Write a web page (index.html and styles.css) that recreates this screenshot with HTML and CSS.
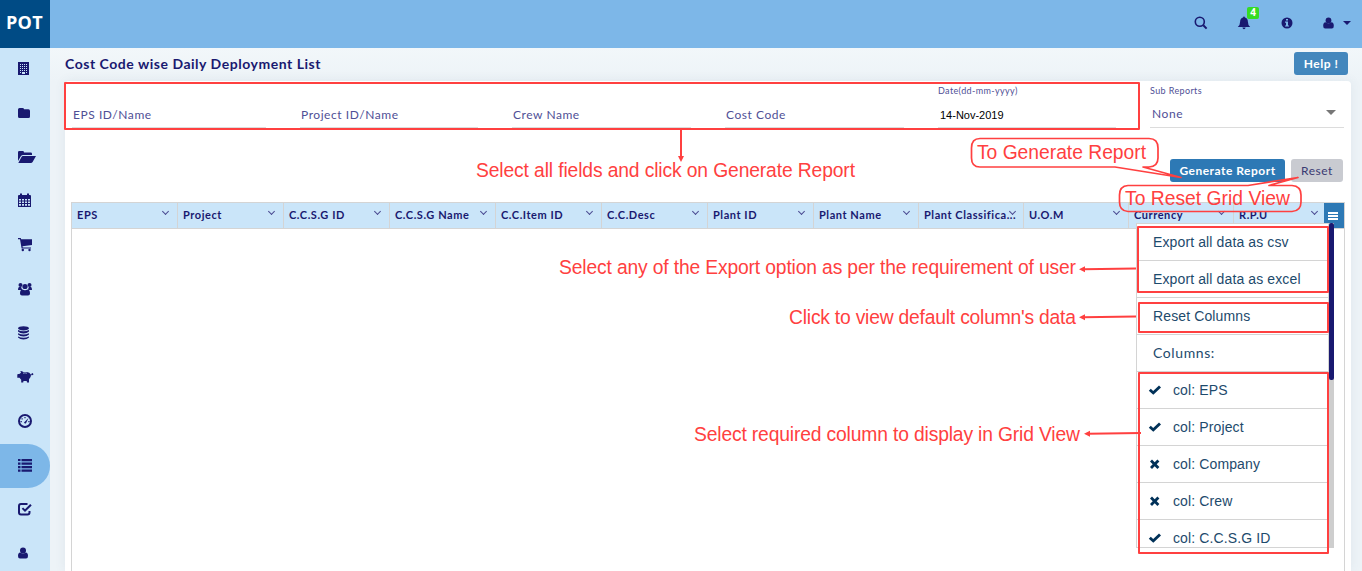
FILE: index.html
```html
<!DOCTYPE html>
<html lang="en">
<head>
<meta charset="utf-8">
<title>Cost Code wise Daily Deployment List</title>
<link rel="stylesheet" href="styles.css">
</head>
<body>
<div class="app">
  <aside class="sidebar">
    <div class="logo">POT</div>
    <nav class="nav">
      <a class="nav-item"><svg viewBox="0 0 16 16"><path fill-rule="evenodd" d="M0 1h11v13H0zM2 3v1h1V3zm2 0v1h1V3zm2 0v1h1V3zm2 0v1h1V3zM2 5v1h1V5zm2 0v1h1V5zm2 0v1h1V5zm2 0v1h1V5zM2 7v1h1V7zm2 0v1h1V7zm2 0v1h1V7zm2 0v1h1V7zM2 9v1h1V9zm2 0v1h1V9zm2 0v1h1V9zm2 0v1h1V9zM2 11v1h1v-1zm2 0v2h3v-2zm4 0v1h1v-1z"/></svg></a>
      <a class="nav-item"><svg viewBox="0 0 16 16"><path d="M0 4.500Q0 3 1.500 3h3Q6 3 6 4.300h4.500Q12 4.300 12 6v5.500Q12 13 10.500 13h-9Q0 13 0 11.500z"/></svg></a>
      <a class="nav-item"><svg class="wide" viewBox="0 0 18 16"><path d="M0 12V3.200Q0 2 1.200 2h3.500Q6 2 6 3.400h6.700Q14 3.400 14 4.800V6H5Q3.800 6 3 7zM4.800 7H18l-3.400 6q-.6 1-1.700 1H.3l3.200-6q.5-1 1.300-1z"/></svg></a>
      <a class="nav-item"><svg viewBox="0 0 16 16"><path fill-rule="evenodd" d="M1 2h1V.5h2V2h5V.5h2V2h1q1 0 1 1v11H0V3q0-1 1-1zm0 4v1.400h2V6zm3 0v1.400h2V6zm3 0v1.400h2V6zm3 0v1.400h2V6zM1 8.400v1.500h2V8.400zm3 0v1.500h2V8.400zm3 0v1.500h2V8.400zm3 0v1.500h2V8.400zM1 11v1.800h2V11zm3 0v1.800h2V11zm3 0v1.800h2V11zm3 0v1.800h2V11z"/></svg></a>
      <a class="nav-item"><svg viewBox="0 0 16 16"><path d="M0 1h2.700l.5 1.300H14V8L4.500 9.200l.2 1.200H13v1H3.600L2 2.200H0z"/><circle cx="4.800" cy="13" r="1.200"/><circle cx="11.500" cy="13" r="1.200"/></svg></a>
      <a class="nav-item"><svg viewBox="0 0 16 16"><circle cx="2.500" cy="4" r="2"/><circle cx="11.500" cy="4" r="2"/><path d="M0 9Q0 5.800 1.300 6h1.900Q3.500 8 4.500 9zM14 9q0-3.200-1.300-3h-1.900Q10.500 8 9.500 9zM2 12.500q0-4 2.500-4 2.500 1.500 5 0Q12 8.500 12 12.500q0 2-2 2H4q-2 0-2-2z"/><circle cx="7" cy="5.500" r="2.600"/></svg></a>
      <a class="nav-item"><svg viewBox="0 0 16 16"><ellipse cx="5.500" cy="3.300" rx="5.500" ry="2.100"/><path d="M0 4.900q5.500 2.600 11 0v1.500q-2 2-5.500 2T0 6.400zM0 8.200q5.500 2.600 11 0v1.400q-2 2-5.500 2T0 9.600zM0 11.500q5.500 2.600 11 0v1q-2 2-5.500 2T0 12.500z"/></svg></a>
      <a class="nav-item"><svg class="pig" viewBox="0 0 17 16"><path d="M1 5h1.300L4 3.800 3.300 2q2 0 3 1h3.500q3 0 4 2.500 1.200 0 1-1.500h.7q.2 1 .8.800v1q-1 .7-2.300.2 0 2.700-2 4.200V13.500h-2l-.3-1.500H6.500l-.3 1.500h-2V10.800L2.500 8.700H.3V5.500z"/><path class="pig-slot" d="M6 4.200q2-.7 4 0"/></svg></a>
      <a class="nav-item"><svg viewBox="0 0 16 16"><circle class="line" cx="7" cy="8" r="6"/><path d="M6 9.500 10.500 5 8 10.300Q6.500 11 6 9.500zM6.400 4h1.200v1.200H6.400zM3.500 5.200h1.200v1.200H3.500zM2.500 8h1.300v1.200H2.500zM10.300 8h1.300v1.200h-1.300z"/></svg></a>
      <a class="nav-item active"><svg viewBox="0 0 16 16"><path d="M0 2h2.500v2H0zm3.500 0H14v2.300H3.500zM0 5.500h2.500v2.200H0zm3.500 0H14v2.200H3.500zM0 9h2.500v2.200H0zm3.500 0H14v2.200H3.500zM0 12.500h2.500v2.200H0zm3.500 0H14v2.200H3.500z"/></svg></a>
      <a class="nav-item"><svg viewBox="0 0 16 16"><path class="line" d="M9.500 3H3Q1 3 1 5v6.500q0 2 2 2h6.500q2 0 2-2V10"/><path d="M3.700 7.800 5.100 6.400 7 8.300 12.200 3l1.500 1.400L7 11.100z"/></svg></a>
      <a class="nav-item"><svg viewBox="0 0 16 16"><circle cx="5" cy="5.500" r="3"/><path d="M0 11q0-3.500 2.200-3.500Q5 9.500 7.800 7.500 10 7.500 10 11q0 2.500-2 2.500H2q-2 0-2-2.500z"/></svg></a>
    </nav>
  </aside>

  <div class="main">
    <header class="topbar">
      <svg class="icon" width="14" height="14" viewBox="0 0 14 14"><circle class="line thin" cx="5.800" cy="5.800" r="4.500"/><path class="line" d="m9.300 9.300 3.300 3.300"/></svg>
      <div class="bell">
        <svg class="icon" width="14" height="14" viewBox="0 0 14 14"><path d="M7 .5q.9 0 .9 1 3 .8 3 4.300 0 3.500 2.300 5.200H.8q2.300-1.700 2.300-5.200 0-3.500 3-4.300 0-1 .9-1zM5.400 11.500h3.200Q8.300 13.300 7 13.300t-1.600-1.800z"/></svg>
        <span class="badge">4</span>
      </div>
      <svg class="icon" width="12" height="12" viewBox="0 0 12 12"><path fill-rule="evenodd" d="M6 .5a5.500 5.500 0 1 0 0 11 5.500 5.500 0 1 0 0-11zM5 2v1.500h2V2zM4 4.600v1.100h1v2.800H4v1.100h4V8.500H7V4.600z"/></svg>
      <div class="account">
        <svg class="icon" width="12" height="12" viewBox="0 0 12 12"><circle cx="5.500" cy="3.500" r="2.900"/><path d="M.2 9q0-3.700 2.300-3.700 3 2.200 6 0 2.300 0 2.300 3.700 0 2.500-2 2.500H2.200q-2 0-2-2.500z"/></svg>
        <span class="caret"></span>
      </div>
    </header>

    <div class="page">
      <div class="page-head">
        <h1 class="title">Cost Code wise Daily Deployment List</h1>
        <button class="btn help">Help !</button>
      </div>
      <section class="panel">
        <div class="filters">
          <div class="field"><span class="value">EPS ID/Name</span></div>
          <div class="field"><span class="value">Project ID/Name</span></div>
          <div class="field"><span class="value">Crew Name</span></div>
          <div class="field"><span class="value">Cost Code</span></div>
          <div class="field"><span class="label">Date(dd-mm-yyyy)</span><span class="value date">14-Nov-2019</span></div>
          <div class="field"><span class="label">Sub Reports</span><span class="value select">None<i class="arrow"></i></span></div>
        </div>
        <div class="actions">
          <button class="btn generate">Generate Report</button>
          <button class="btn reset">Reset</button>
        </div>
        <div class="grid">
          <div class="grid-head">
            <div class="col">EPS<i class="chev"></i></div>
            <div class="col">Project<i class="chev"></i></div>
            <div class="col">C.C.S.G ID<i class="chev"></i></div>
            <div class="col">C.C.S.G Name<i class="chev"></i></div>
            <div class="col">C.C.Item ID<i class="chev"></i></div>
            <div class="col">C.C.Desc<i class="chev"></i></div>
            <div class="col">Plant ID<i class="chev"></i></div>
            <div class="col">Plant Name<i class="chev"></i></div>
            <div class="col">Plant Classifica...<i class="chev"></i></div>
            <div class="col">U.O.M<i class="chev"></i></div>
            <div class="col">Currency<i class="chev"></i></div>
            <div class="col last">R.P.U<i class="chev"></i></div>
            <div class="menu-button"><span class="bars"></span></div>
          </div>
          <div class="grid-menu">
            <ul class="menu-list">
              <li>Export all data as csv</li>
              <li>Export all data as excel</li>
              <li>Reset Columns</li>
              <li class="heading">Columns:</li>
              <li class="toggle"><svg viewBox="0 0 14 14"><path d="M.8 7.700 2.800 5.700l2.400 2.200L11 2.600l2 1.900-7.700 7.200z"/></svg>col: EPS</li>
              <li class="toggle"><svg viewBox="0 0 14 14"><path d="M.8 7.700 2.800 5.700l2.400 2.200L11 2.600l2 1.900-7.700 7.200z"/></svg>col: Project</li>
              <li class="toggle"><svg viewBox="0 0 14 14"><path d="M4 2.500 6.700 5.200 9.400 2.500l2 2L8.700 7.200l2.700 2.700-2 2-2.700-2.700L4 11.900l-2-2 2.700-2.700L2 4.500z"/></svg>col: Company</li>
              <li class="toggle"><svg viewBox="0 0 14 14"><path d="M4 2.500 6.700 5.200 9.400 2.500l2 2L8.700 7.200l2.700 2.700-2 2-2.700-2.700L4 11.900l-2-2 2.700-2.700L2 4.500z"/></svg>col: Crew</li>
              <li class="toggle"><svg viewBox="0 0 14 14"><path d="M.8 7.700 2.800 5.700l2.400 2.200L11 2.600l2 1.900-7.700 7.200z"/></svg>col: C.C.S.G ID</li>
            </ul>
            <div class="track"><div class="thumb"></div></div>
          </div>
        </div>
      </section>
    </div>
  </div>
</div>

<svg class="notes" width="1362" height="571" viewBox="0 0 1362 571">
  <g class="stroke">
    <rect x="65" y="83" width="1074" height="46"/>
    <rect x="1138" y="227" width="190" height="65"/>
    <rect x="1139" y="303" width="189" height="29"/>
    <rect x="1139" y="373" width="189" height="180"/>
    <path d="M681 130v29M1136 268.500l-53 .8M1136 316.500l-53 .7M1141 433l-53 .8"/>
    <path class="bubble" d="M980 138.500H1149Q1158 138.500 1158 148V158Q1158 166.500 1149 167H1143L1181 177.500 1115 167H980Q971.500 167 971.500 158V148Q971.500 138.500 980 138.500z"/>
    <path class="bubble" d="M1128 185.500H1248L1298 177.500 1269 185.500H1292Q1301 186 1301 195V202Q1301 211 1292 211.500H1128Q1119.500 211 1119.500 202V195Q1119.500 186 1128 185.500z"/>
  </g>
  <path class="tip" d="M678 156h6l-3 6zM1085 266.200v6l-6-3zM1085 314.200v6l-6-3zM1090 430.800v6l-6-3z"/>
  <text x="476" y="177" textLength="379">Select all fields and click on Generate Report</text>
  <text x="977" y="159" textLength="169">To Generate Report</text>
  <text x="1125" y="205" textLength="165">To Reset Grid View</text>
  <text x="559" y="274" textLength="517">Select any of the Export option as per the requirement of user</text>
  <text x="789" y="324" textLength="287">Click to view default column's data</text>
  <text x="694" y="441" textLength="386">Select required column to display in Grid View</text>
</svg>
</body>
</html>
```
FILE: styles.css
```css
* { box-sizing: border-box; }

body {
  margin: 0;
  width: 1362px;
  height: 571px;
  overflow: hidden;
  font-family: Lato, "Open Sans", sans-serif;
  color: #191970;
}

.app { display: flex; height: 571px; }

.sidebar { width: 50px; flex: none; background: #cae5f9; }

.logo {
  height: 48px;
  padding-left: 6px;
  background: #004b85;
  color: #fff;
  font: 700 18px/44px "Open Sans", sans-serif;
  letter-spacing: .3px;
}

.nav { display: flex; flex-direction: column; }

.nav-item {
  display: flex;
  align-items: center;
  height: 44px;
  padding: 0 0 2px 18px;
}

.nav-item svg { width: 16px; height: 16px; fill: #191970; }
.nav-item svg.wide { width: 18px; }
.nav-item svg.pig { width: 17px; margin-left: -1px; }
.pig-slot { fill: none; stroke: #cae5f9; stroke-width: .7; }
.nav-item.active { background: #7db7e8; border-radius: 0 22px 22px 0; }

svg .line { fill: none; stroke: #191970; stroke-width: 2; }
svg .thin { stroke-width: 1.6; }

.main { flex: 1; min-width: 0; display: flex; flex-direction: column; }

.topbar {
  display: flex;
  align-items: center;
  justify-content: flex-end;
  height: 48px;
  flex: none;
  padding: 0 11px 3px 0;
  background: #7db7e8;
}

.icon { display: block; fill: #191970; }

.bell { position: relative; margin: 0 30px 0 29px; }

.badge {
  position: absolute;
  left: 10px;
  top: -9px;
  width: 12px;
  height: 12px;
  border-radius: 2px;
  background: #35dc22;
  color: #fff;
  font: 700 10px/10px "Open Sans", sans-serif;
  text-align: center;
}

.account { display: flex; align-items: center; gap: 8px; margin-left: 30px; }

.caret {
  border: 4px solid transparent;
  border-top-color: #191970;
  border-bottom: 0;
}

.page {
  flex: 1;
  display: flex;
  flex-direction: column;
  min-height: 0;
  padding: 0 11px 0 15px;
  background: linear-gradient(#f2f7fa, #edf3f7 33px);
}

.page-head {
  display: flex;
  justify-content: space-between;
  align-items: flex-start;
  height: 33px;
  flex: none;
  padding: 4px 3px 0 0;
}

.title { margin: 0; font-size: 14px; line-height: 24px; font-weight: 700; letter-spacing: .53px; }

.btn {
  height: 23px;
  padding: 0;
  border: 0;
  border-radius: 3px;
  font: 700 12px/23px Lato, sans-serif;
  letter-spacing: .5px;
  color: #fff;
}

.help { width: 54px; background: #4387bd; }

.panel {
  flex: 1;
  display: flex;
  flex-direction: column;
  min-height: 0;
  padding: 0 6px;
  border-radius: 4px 4px 0 0;
  background: #fff;
  box-shadow: 0 0 12px rgba(60, 90, 120, .08);
}

.filters {
  display: grid;
  grid-template-columns: 194px 178px 179px 179px 178px 194px;
  column-gap: 34px;
  height: 47px;
  flex: none;
  padding-left: 1px;
}

.field {
  display: flex;
  flex-direction: column;
  justify-content: flex-end;
  border-bottom: 1px solid #dcdcdc;
  color: #4f4f96;
}

.label { height: 19px; font-size: 9px; line-height: 12px; letter-spacing: .38px; }

.value { height: 23px; padding-left: 1px; font-size: 12px; line-height: 21px; letter-spacing: .55px; }

.date { padding-left: 2px; font: 11px/22px "Liberation Sans", sans-serif; letter-spacing: 0; color: #000; }

.select { display: flex; justify-content: space-between; padding: 0 8px 0 2px; line-height: 20px; }

.arrow { margin-top: 6px; height: 5px; border: 5px solid transparent; border-top-color: #777; border-bottom: 0; }

.actions { display: flex; justify-content: flex-end; gap: 6px; flex: none; padding: 31px 2px 20px 0; }
.generate { width: 115px; background: #2d79b5; }
.reset { width: 52px; background: #c9cbd1; color: #3a3a72; font-weight: 400; }

.grid { position: relative; flex: 1; border: 1px solid #d4d4d4; border-bottom: 0; }

.grid-head {
  display: grid;
  grid-template-columns: repeat(7, 106px) repeat(4, 105px) 90px 20px;
  height: 26px;
  border-bottom: 1px solid #d4d4d4;
  background: #cae5f9;
}

.col {
  display: flex;
  justify-content: space-between;
  padding: 0 9px 0 5px;
  border-right: 1px solid #d4d4d4;
  font-size: 11px;
  font-weight: 700;
  line-height: 24px;
  letter-spacing: .56px;
  white-space: nowrap;
}

.col.last { border-right: 0; padding-right: 7px; }

.chev {
  flex: none;
  width: 5px;
  height: 5px;
  margin: 6px 0 0 -6px;
  border: solid #4b4b91;
  border-width: 0 1px 1px 0;
  transform: rotate(45deg);
}

.menu-button { display: flex; align-items: center; justify-content: center; padding-right: 2px; background: #2d79b5; }
.bars { width: 10px; height: 8px; background: linear-gradient(#fff 2px, transparent 2px 3px, #fff 3px 5px, transparent 5px 6px, #fff 6px); }

.grid-menu {
  position: absolute;
  top: 20px;
  left: 1064px;
  display: flex;
  width: 198px;
  height: 325px;
}

.menu-list {
  flex: 1;
  overflow: hidden;
  margin: 0;
  padding: 0;
  border: 1px solid #d4d4d4;
  background: #fff;
  list-style: none;
  color: #1d4a6c;
  font: 14px/36px "Liberation Sans", sans-serif;
  letter-spacing: .12px;
}

.menu-list li { height: 37px; padding-left: 16px; border-bottom: 1px solid #d4d4d4; }
.menu-list .heading { font-family: Lato, sans-serif; line-height: 35px; letter-spacing: .6px; }
.menu-list .toggle { display: flex; align-items: center; gap: 11px; padding-left: 11px; }
.toggle svg { width: 14px; height: 14px; fill: #003158; }

.track { width: 5px; background: #cecece; }
.thumb { height: 157px; border-radius: 2px; background: #191970; }

.notes { position: absolute; top: 0; left: 0; font: 19.3px "Liberation Sans", sans-serif; fill: #ff4040; }
.stroke { fill: none; stroke: #ff4040; stroke-width: 2; stroke-linejoin: round; }
.bubble { stroke-width: 1.7; }
.tip { fill: #ff4040; }
```
